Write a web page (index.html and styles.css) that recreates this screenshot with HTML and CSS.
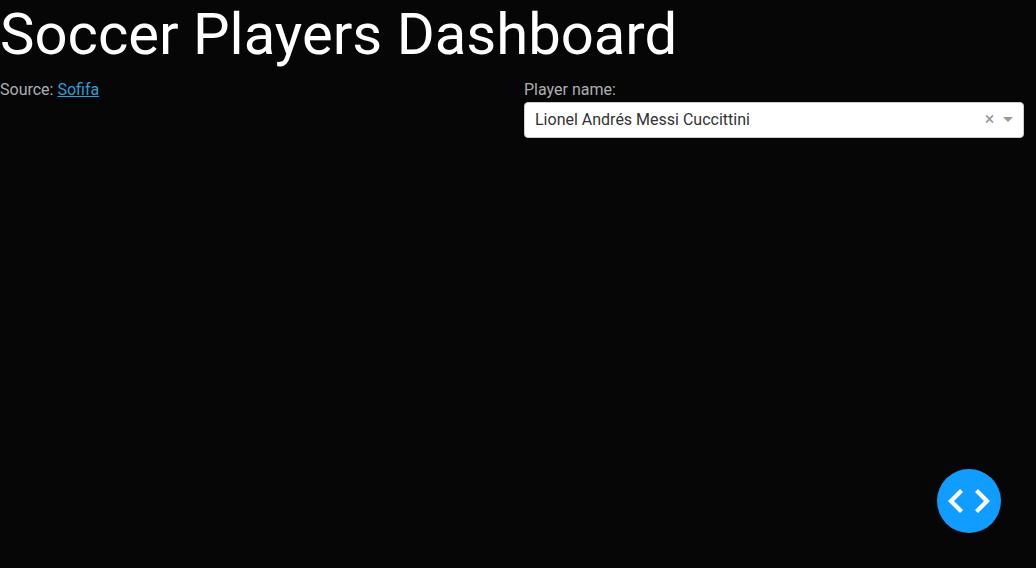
FILE: index.html
```html
<!DOCTYPE html>
<html lang="en">
<head>
<meta charset="utf-8">
<title>Soccer Players Dashboard</title>
<link rel="stylesheet" href="styles.css">
</head>
<body>
<main>
  <h1 class="title">Soccer Players Dashboard</h1>
  <div class="row">
    <p class="source">Source: <a href="#sofifa">Sofifa</a></p>
    <div class="field">
      <label class="field-label" for="player">Player name:</label>
      <div class="picker">
        <select class="picker-select" id="player">
          <option selected>Lionel Andrés Messi Cuccittini</option>
        </select>
        <button class="picker-clear" type="button" aria-label="Clear value">×</button>
        <span class="picker-arrow"></span>
      </div>
    </div>
  </div>
</main>
<button class="debug" type="button" aria-label="Toggle debug menu">
  <svg class="debug-icon" viewBox="0 0 42 24" aria-hidden="true">
    <path d="M12 0 15 3 6 12l9 9-3 3L0 12zM30 0l-3 3 9 9-9 9 3 3 12-12z" fill="#fff"/>
  </svg>
</button>
</body>
</html>
```
FILE: styles.css
```css
* {
  box-sizing: border-box;
}

body {
  margin: 0;
  background: #060606;
  color: #adafae;
  font-family: Roboto, "Liberation Sans", sans-serif;
  font-size: 16px;
  line-height: 24px;
}

.title {
  margin: 0 0 10px;
  color: #fff;
  font-size: 58px;
  font-weight: 400;
  line-height: 68px;
}

.row {
  display: grid;
  grid-template-columns: 1fr 1fr;
  column-gap: 24px;
  padding-right: 12px;
}

.source {
  margin: 0;
}

.source a {
  color: #2a9fd6;
}

.field-label {
  display: block;
}

.picker {
  position: relative;
}

.picker-select {
  display: block;
  width: 100%;
  height: 36px;
  padding: 0 52px 0 10px;
  appearance: none;
  border: 1px solid #ccc;
  border-radius: 4px;
  background: #fff;
  color: #333;
  font: inherit;
}

.picker-clear {
  position: absolute;
  top: 0;
  right: 26px;
  width: 17px;
  height: 34px;
  padding: 0;
  border: 0;
  background: none;
  color: #999;
  font: 18px/34px Roboto, sans-serif;
}

.picker-arrow {
  position: absolute;
  top: 15px;
  right: 11px;
  border: 5px solid transparent;
  border-top-color: #999;
  border-bottom: 0;
  pointer-events: none;
}

.debug {
  position: fixed;
  right: 35px;
  bottom: 35px;
  display: flex;
  align-items: center;
  justify-content: center;
  width: 64px;
  height: 64px;
  padding: 0;
  border: 0;
  border-radius: 50%;
  background: #119dff;
}

.debug-icon {
  width: 42px;
  height: 24px;
}
```
